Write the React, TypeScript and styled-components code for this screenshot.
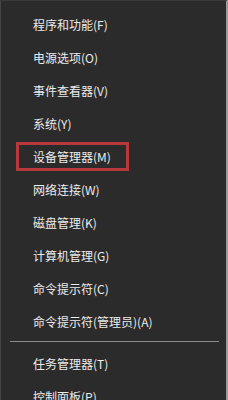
import styled, { createGlobalStyle } from "styled-components";

const GlobalStyle = createGlobalStyle`
  html, body {
    margin: 0;
    padding: 0;
    background: #2b2b2b;
  }
  body {
    font-family: "Microsoft YaHei", "Noto Sans CJK SC", "Liberation Sans", sans-serif;
  }
`;

type Entry = { label: string; boxed?: boolean } | "sep";

const ENTRIES: Entry[] = [
  { label: "程序和功能(F)" },
  { label: "电源选项(O)" },
  { label: "事件查看器(V)" },
  { label: "系统(Y)" },
  { label: "设备管理器(M)", boxed: true },
  { label: "网络连接(W)" },
  { label: "磁盘管理(K)" },
  { label: "计算机管理(G)" },
  { label: "命令提示符(C)" },
  { label: "命令提示符(管理员)(A)" },
  "sep",
  { label: "任务管理器(T)" },
  { label: "控制面板(P)" },
];

export default function App() {
  return (
    <>
      <GlobalStyle />
      <Menu>
        {ENTRIES.map((entry, i) =>
          entry === "sep" ? (
            <Separator key={i} />
          ) : (
            <MenuItem key={i}>
              <Label $boxed={entry.boxed}>{entry.label}</Label>
            </MenuItem>
          )
        )}
      </Menu>
    </>
  );
}

const Menu = styled.div`
  width: 228px;
  height: 400px;
  box-sizing: border-box;
  overflow: hidden;
  background: #2b2b2b;
  border-top: 1px solid #3a3a3a;
  border-left: 1px solid #454545;
  border-right: 2px solid #9a9a9a;
  padding-top: 6.5px;
  display: flex;
  flex-direction: column;
`;

const MenuItem = styled.div`
  flex: 0 0 33px;
  height: 33px;
  display: flex;
  align-items: center;
  padding-left: 32px;
`;

const Label = styled.span<{ $boxed?: boolean }>`
  font-size: 12px;
  line-height: 17px;
  color: #ececec;
  white-space: nowrap;
  ${(p) =>
    p.$boxed &&
    `
    border: 3px solid #b8383b;
    padding: 3px 15px 3px 14px;
    margin-left: -17px;
  `}
`;

const Separator = styled.div`
  flex: 0 0 9px;
  display: flex;
  align-items: flex-start;
  padding: 3.5px 7px 0 9px;
  box-sizing: border-box;

  &::before {
    content: "";
    flex: 1;
    height: 1px;
    background: #8c8c8c;
  }
`;
